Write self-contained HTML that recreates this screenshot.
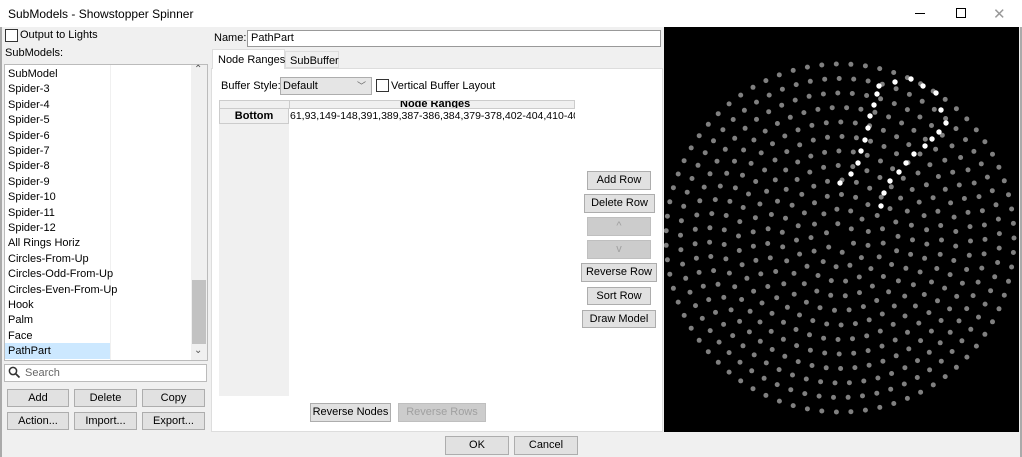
<!DOCTYPE html>
<html><head><meta charset="utf-8"><style>
*{box-sizing:border-box;margin:0;padding:0}
body{width:1022px;height:457px;background:#f0f0f0;font-family:"Liberation Sans",sans-serif;font-size:11px;color:#000;position:relative;overflow:hidden}
.a{position:absolute;white-space:nowrap}
.btn{position:absolute;background:#e1e1e1;border:1px solid #adadad;text-align:center;font-size:11px;line-height:17px;white-space:nowrap}
.dis{color:#a0a0a0;background:#cccccc;border-color:#bfbfbf}
.cb{position:absolute;width:13px;height:13px;border:1px solid #333;background:#fff}
.li{position:absolute;left:8px;font-size:11px}
</style></head><body>
<div class="a" style="left:0;top:0;width:1022px;height:27px;background:#fff"></div>
<div class="a" style="left:8px;top:7px;font-size:12px">SubModels - Showstopper Spinner</div>
<div class="a" style="left:915px;top:13px;width:10px;height:1px;background:#000"></div>
<div class="a" style="left:956px;top:8px;width:10px;height:10px;border:1px solid #000"></div>
<div class="a" style="left:993px;top:5px;font-size:15px;color:#999">✕</div>
<div class="a" style="left:0;top:27px;width:2px;height:430px;background:#aaa"></div>
<div class="a" style="left:1020px;top:27px;width:2px;height:430px;background:#aaa"></div>

<div class="cb" style="left:5px;top:29px"></div>
<div class="a" style="left:20px;top:29px">Output to Lights</div>
<div class="a" style="left:5px;top:47px">SubModels:</div>
<div class="a" style="left:4px;top:64px;width:204px;height:297px;background:#fff;border:1px solid #bbb"></div>
<div class="a" style="left:110px;top:65px;width:1px;height:295px;background:#f0f0f0"></div>
<div class="a" style="left:191px;top:65px;width:16px;height:295px;background:#f0f0f0"></div>
<div class="a" style="left:192px;top:280px;width:14px;height:64px;background:#c2c2c2"></div>
<div class="a" style="left:194px;top:64px;font-size:10px;color:#555">⌃</div>
<div class="a" style="left:194px;top:345px;font-size:10px;color:#555">⌄</div>
<div class="a" style="left:5px;top:343px;width:105px;height:16px;background:#cce8ff"></div>
<div id="list"></div>
<div class="a" style="left:4px;top:364px;width:203px;height:18px;background:#fff;border:1px solid #bbb"></div>
<svg class="a" style="left:8px;top:366px" width="13" height="13"><circle cx="5" cy="5" r="3.6" fill="none" stroke="#333" stroke-width="1.5"/><line x1="7.6" y1="7.6" x2="11.5" y2="11.5" stroke="#333" stroke-width="1.7"/></svg>
<div class="a" style="left:25px;top:367px;color:#666">Search</div>
<div class="btn" style="left:7px;top:389px;width:62px;height:18px">Add</div>
<div class="btn" style="left:74px;top:389px;width:63px;height:18px">Delete</div>
<div class="btn" style="left:142px;top:389px;width:63px;height:18px">Copy</div>
<div class="btn" style="left:7px;top:412px;width:62px;height:18px">Action...</div>
<div class="btn" style="left:74px;top:412px;width:63px;height:18px">Import...</div>
<div class="btn" style="left:142px;top:412px;width:63px;height:18px">Export...</div>

<div class="a" style="left:214px;top:32px">Name:</div>
<div class="a" style="left:247px;top:30px;width:414px;height:17px;background:#fff;border:1px solid #999;padding:1px 3px">PathPart</div>
<div class="a" style="left:211px;top:68px;width:452px;height:364px;background:#fff;border:1px solid #ddd"></div>
<div class="a" style="left:212px;top:49px;width:73px;height:20px;background:#fff;border:1px solid #ddd;border-bottom:none;padding:4px 5px">Node Ranges</div>
<div class="a" style="left:285px;top:51px;width:54px;height:17px;background:#f0f0f0;border:1px solid #ddd;padding:3px 4px">SubBuffer</div>
<div class="a" style="left:221px;top:80px">Buffer Style:</div>
<div class="a" style="left:280px;top:77px;width:92px;height:18px;background:#e5e5e5;border:1px solid #adadad;padding:2px 2px">Default<span style="position:absolute;right:5px;top:1px;color:#666;font-size:9px">﹀</span></div>
<div class="cb" style="left:376px;top:79px"></div>
<div class="a" style="left:391px;top:80px">Vertical Buffer Layout</div>
<div class="a" style="left:219px;top:100px;width:70px;height:296px;background:#f0f0f0"></div>
<div class="a" style="left:219px;top:100px;width:356px;height:9px;background:#f0f0f0;border:1px solid #ccc;overflow:hidden"><div style="position:absolute;left:69px;top:-1px;width:1px;height:9px;background:#ccc"></div><div style="position:absolute;left:180px;top:-3px;font-weight:bold">Node Ranges</div></div>
<div class="a" style="left:219px;top:108px;width:70px;height:16px;border:1px solid #ccc;font-weight:bold;text-align:center;line-height:14px">Bottom</div>
<div class="a" style="left:290px;top:109px;width:285px;overflow:hidden;white-space:nowrap;line-height:14px;font-size:10.5px">61,93,149-148,391,389,387-386,384,379-378,402-404,410-409,4</div>
<div class="btn" style="left:587px;top:171px;width:64px;height:19px">Add Row</div>
<div class="btn" style="left:584px;top:194px;width:71px;height:19px">Delete Row</div>
<div class="btn dis" style="left:587px;top:217px;width:64px;height:19px">^</div>
<div class="btn dis" style="left:587px;top:240px;width:64px;height:19px">v</div>
<div class="btn" style="left:581px;top:263px;width:76px;height:19px">Reverse Row</div>
<div class="btn" style="left:587px;top:287px;width:64px;height:18px">Sort Row</div>
<div class="btn" style="left:582px;top:310px;width:74px;height:18px">Draw Model</div>
<div class="btn" style="left:310px;top:403px;width:81px;height:19px">Reverse Nodes</div>
<div class="btn dis" style="left:398px;top:403px;width:88px;height:19px">Reverse Rows</div>
<div class="btn" style="left:445px;top:436px;width:64px;height:19px">OK</div>
<div class="btn" style="left:514px;top:436px;width:64px;height:19px">Cancel</div>

<svg class="a" id="cv" style="left:664px;top:27px;background:#000" width="355" height="405"></svg>
<script>
var names=["SubModel","Spider-3","Spider-4","Spider-5","Spider-6","Spider-7","Spider-8","Spider-9","Spider-10","Spider-11","Spider-12","All Rings Horiz","Circles-From-Up","Circles-Odd-From-Up","Circles-Even-From-Up","Hook","Palm","Face","PathPart"];
var h="";names.forEach(function(n,i){h+='<div class="li" style="top:'+(68+i*15.4)+'px">'+n+'</div>'});
document.getElementById("list").innerHTML=h;
var s="",cx=176,cy=211;
for(var k=1;k<=12;k++){var r=k*14.5,n=Math.max(6,Math.round(2*Math.PI*r/14.5));
for(var j=0;j<n;j++){var a=j*2*Math.PI/n+k*0.37;s+='<circle cx="'+(cx+r*Math.cos(a)).toFixed(1)+'" cy="'+(cy+r*Math.sin(a)).toFixed(1)+'" r="2.5" fill="#808080"/>'}}
var w=[[879,86],[895,82],[911,79],[923,86],[936,93],[941,110],[946,123],[939,132],[932,139],[925,146],[914,154],[906,163],[899,172],[890,181],[884,193],[881,206],[877,94],[874,105],[870,116],[868,128],[865,140],[861,151],[858,163],[851,174],[840,183]];
w.forEach(function(p){s+='<circle cx="'+(p[0]-664)+'" cy="'+(p[1]-27)+'" r="2.7" fill="#fff"/>'});
document.getElementById("cv").innerHTML=s;
</script>
</body></html>
